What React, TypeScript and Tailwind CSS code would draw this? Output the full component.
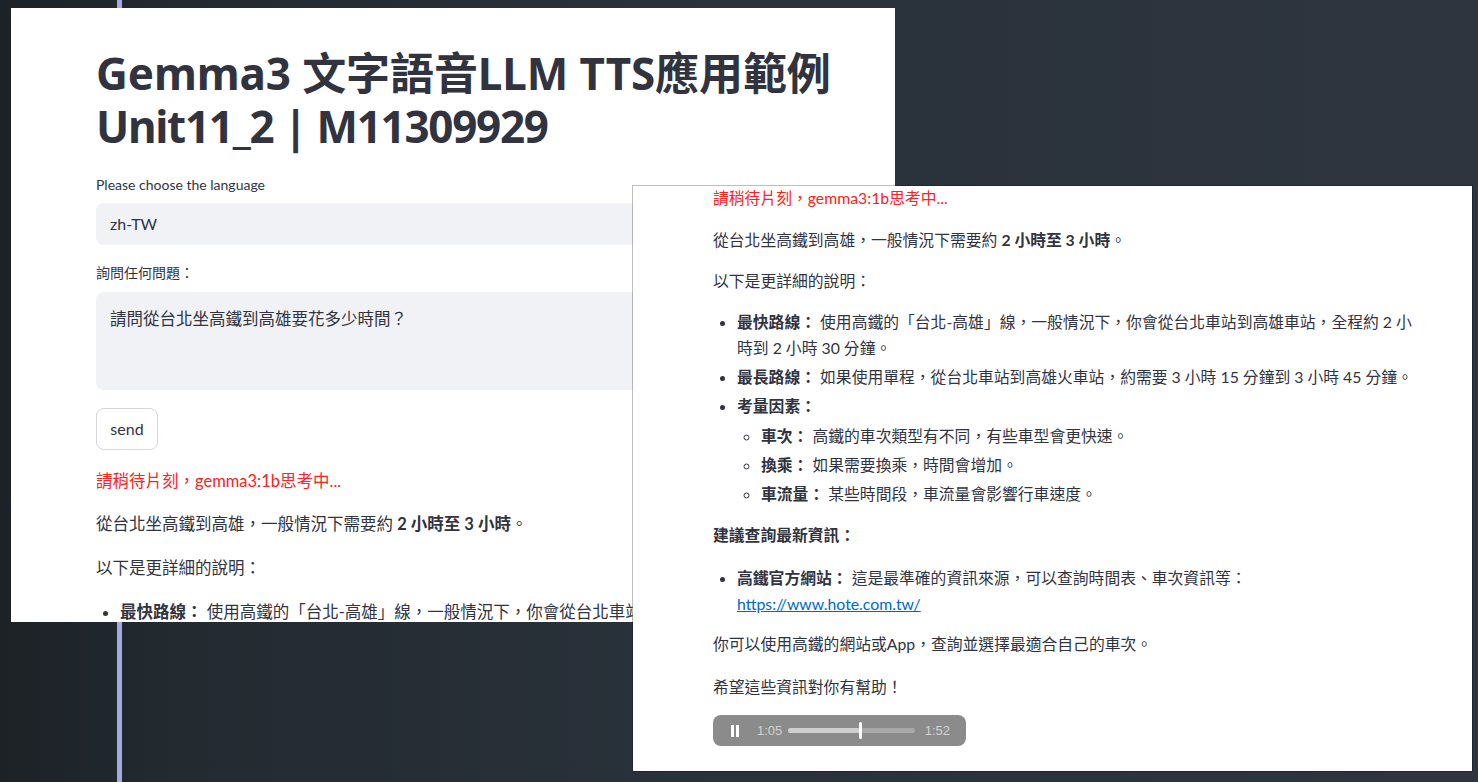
import React from 'react';

const ink = 'text-[#31333f]';

// Left window: the Streamlit form
const FormWindow = () => (
  <div className="absolute left-[11px] top-[8px] w-[884px] h-[614px] bg-white overflow-hidden z-10">
    <div className={`pl-[85px] pt-[39px] w-[800px] ${ink}`}>
      <h1 className="whitespace-nowrap font-[Noto_Sans,Noto_Sans_CJK_TC,sans-serif] text-[44px] leading-[53px] font-bold tracking-[-0.1px] text-[#31333f]">
        Gemma3 文字語音LLM TTS應用範例
        <br />
        <span className="tracking-[-1.3px]">Unit11_2 | M11309929</span>
      </h1>

      <p className="mt-[22px] text-[14px] leading-[20px]">Please choose the language</p>
      <div className="mt-[8px] h-[42px] rounded-lg bg-[#f0f2f6] flex items-center pl-[14px] text-[16px]">
        zh-TW
      </div>

      <p className="mt-[18px] text-[14px] leading-[20px]">詢問任何問題：</p>
      <div className="mt-[9px] h-[98px] rounded-lg bg-[#f0f2f6] pl-[14px] pt-[15px] text-[16.5px] leading-[24px]">
        請問從台北坐高鐵到高雄要花多少時間？
      </div>

      <button className="mt-[18px] h-[42px] w-[62px] rounded-lg border border-[#d6d6d9] bg-white text-[16px]">
        send
      </button>

      <p className="mt-[19px] text-[16.5px] leading-[24px] text-[#ff2020]">請稍待片刻，gemma3:1b思考中...</p>
      <p className="mt-[19px] text-[16.5px] leading-[24px]">
        從台北坐高鐵到高雄，一般情況下需要約 <b>2 小時至 3 小時</b>。
      </p>
      <p className="mt-[20px] text-[16.5px] leading-[24px]">以下是更詳細的說明：</p>
      <ul className="mt-[20px] list-disc pl-[24px] text-[16.5px] leading-[24px]">
        <li className="whitespace-nowrap">
          <b>最快路線：</b> 使用高鐵的「台北-高雄」線，一般情況下，你會從台北車站到高雄車站，全程約 2 小時到 2 小時 30 分鐘。
        </li>
      </ul>
    </div>
  </div>
);

const AudioBar = () => (
  <div className="mt-[16px] w-[253px] h-[31px] rounded-lg bg-[#8b8b8b] flex items-center pl-[18px] pr-[16px]">
    <div className="flex gap-[2px]">
      <span className="w-[3px] h-[12px] bg-white" />
      <span className="w-[3px] h-[12px] bg-white" />
    </div>
    <span className="ml-[18px] text-[13px] text-[#d2d2d2] font-[Liberation_Sans,sans-serif]">1:05</span>
    <div className="relative ml-[6px] w-[127px] h-[5px] rounded-full bg-[#a8a8a8]">
      <div className="h-full w-[72px] rounded-full bg-[#cfcfcf]" />
      <div className="absolute left-[71px] top-[-6px] w-[3px] h-[17px] rounded-sm bg-white" />
    </div>
    <span className="ml-auto text-[13px] text-[#d2d2d2] font-[Liberation_Sans,sans-serif]">1:52</span>
  </div>
);

// Right window: the model answer
const AnswerWindow = () => (
  <div className="absolute left-[633px] top-[186px] w-[839px] h-[585px] bg-white z-20 shadow-[0_0_0_1px_rgba(0,0,0,0.25)]">
    <div className={`pl-[80px] text-[15.8px] ${ink}`}>
      <p className="leading-[24px] text-[#ff2020]">請稍待片刻，gemma3:1b思考中...</p>
      <p className="mt-[18px] leading-[24px]">
        從台北坐高鐵到高雄，一般情況下需要約 <b>2 小時至 3 小時</b>。
      </p>
      <p className="mt-[17px] leading-[24px]">以下是更詳細的說明：</p>

      <ul className="mt-[16px] list-disc pl-[24px] leading-[26px] space-y-[3px]">
        <li>
          <span className="whitespace-nowrap">
            <b>最快路線：</b> 使用高鐵的「台北-高雄」線，一般情況下，你會從台北車站到高雄車站，全程約 2 小
          </span>
          <br />
          時到 2 小時 30 分鐘。
        </li>
        <li>
          <b>最長路線：</b> 如果使用單程，從台北車站到高雄火車站，約需要 3 小時 15 分鐘到 3 小時 45 分鐘。
        </li>
        <li>
          <b>考量因素：</b>
          <ul className="mt-[4px] list-[circle] pl-[24px] space-y-[3px]">
            <li>
              <b>車次：</b> 高鐵的車次類型有不同，有些車型會更快速。
            </li>
            <li>
              <b>換乘：</b> 如果需要換乘，時間會增加。
            </li>
            <li>
              <b>車流量：</b> 某些時間段，車流量會影響行車速度。
            </li>
          </ul>
        </li>
      </ul>

      <p className="mt-[16px] leading-[24px] font-bold">建議查詢最新資訊：</p>
      <ul className="mt-[18px] list-disc pl-[24px] leading-[26px]">
        <li>
          <b>高鐵官方網站：</b> 這是最準確的資訊來源，可以查詢時間表、車次資訊等：
          <br />
          <a className="text-[#0068c9] underline" href="#">
            https://www.hote.com.tw/
          </a>
        </li>
      </ul>

      <p className="mt-[15px] leading-[24px]">你可以使用高鐵的網站或App，查詢並選擇最適合自己的車次。</p>
      <p className="mt-[19px] leading-[24px]">希望這些資訊對你有幫助！</p>
      <AudioBar />
    </div>
  </div>
);

export default function App() {
  return (
    <div className="relative w-[1478px] h-[782px] overflow-hidden font-[Lato,Noto_Sans_CJK_TC,sans-serif] bg-[linear-gradient(90deg,#1c2226_0%,#232a30_12%,#29313a_45%,#2e353e_100%)]">
      <div className="absolute left-[117px] top-0 bottom-0 w-[5px] bg-[#a5a7e6]" />
      <FormWindow />
      <AnswerWindow />
    </div>
  );
}
